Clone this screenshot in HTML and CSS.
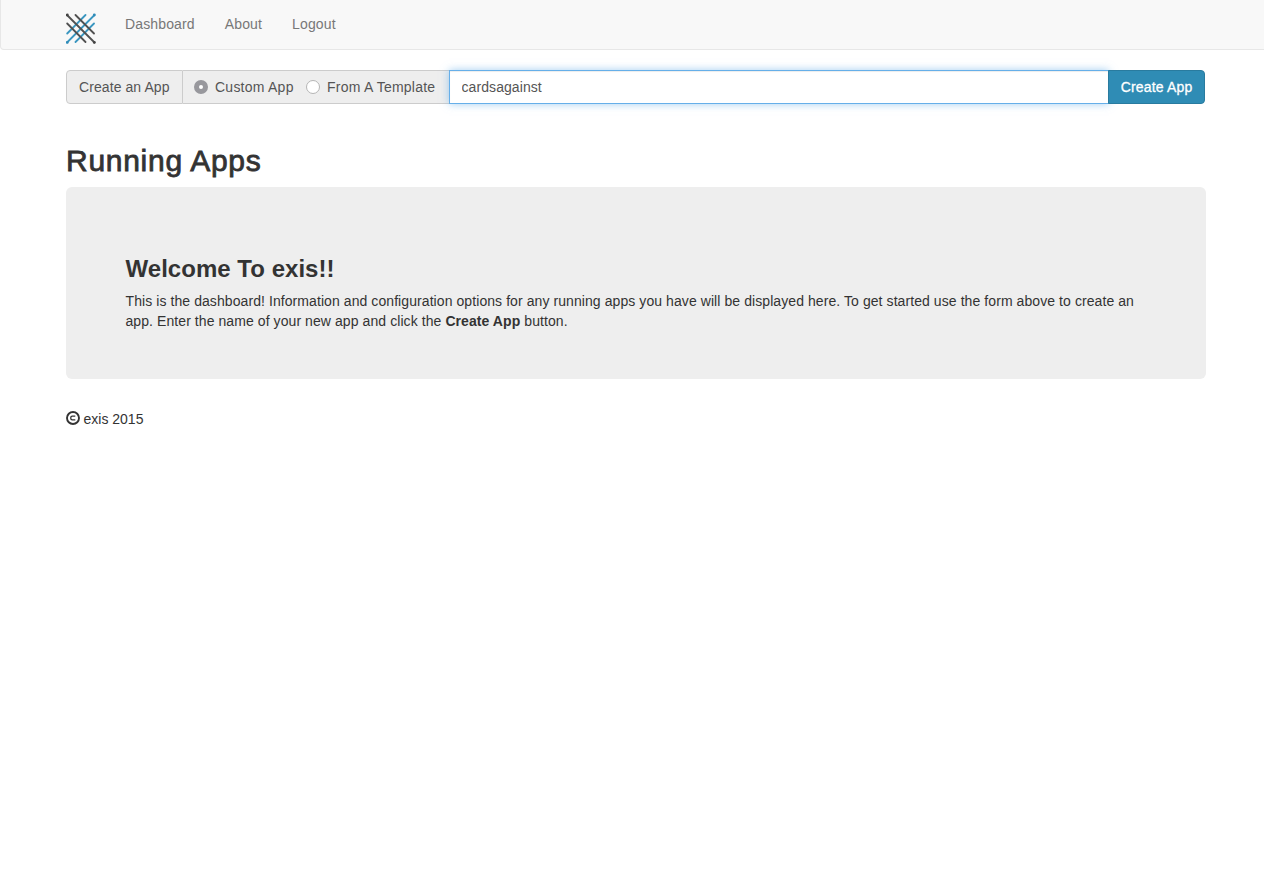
FILE: index.html
```html
<!DOCTYPE html>
<html lang="en">
<head>
<meta charset="utf-8">
<title>exis</title>
<link rel="stylesheet" href="styles.css">
</head>
<body>
<nav class="navbar">
  <a class="brand" href="#" aria-label="exis">
    <svg width="30" height="31" viewBox="0 0 30 31" fill="none" stroke-width="1.8" stroke-linecap="round">
      <g stroke="#3a96c0"><path d="M1.2 20.5 19.5 2M1 29.5 28.5 2M9.5 29 28 10.5"/></g>
      <g stroke="#505050"><path d="M1 2 28.5 29.5M9.5 2 28 20.5M1.2 10.5 19.5 29"/></g>
      <g fill="#444"><circle cx="1.3" cy="2" r="1.4"/><circle cx="28.3" cy="29.4" r="1.4"/></g>
      <g fill="#2f8bb8"><circle cx="28.3" cy="2" r="1.4"/><circle cx="1.3" cy="29.4" r="1.4"/></g>
    </svg>
  </a>
  <a class="nav-link" href="#">Dashboard</a>
  <a class="nav-link" href="#">About</a>
  <a class="nav-link" href="#">Logout</a>
</nav>
<main class="container">
  <form class="input-group">
    <span class="addon addon-title">Create an App</span>
    <span class="addon addon-options">
      <label class="option"><input class="radio" type="radio" name="kind" checked><span>Custom App</span></label>
      <label class="option"><input class="radio" type="radio" name="kind"><span>From A Template</span></label>
    </span>
    <input class="app-name" type="text" value="cardsagainst">
    <button class="create" type="button">Create App</button>
  </form>
  <h2 class="heading">Running Apps</h2>
  <section class="jumbotron">
    <h3 class="welcome">Welcome To exis!!</h3>
    <p class="intro"><span class="line">This is the dashboard! Information and configuration options for any running apps you have will be displayed here. To get started use the form above to create an</span> <span class="line">app. Enter the name of your new app and click the <b>Create App</b> button.</span></p>
  </section>
  <footer class="footer">
    <svg class="copy" width="14" height="14" viewBox="0 0 14 14" fill="none" stroke="#333">
      <circle cx="7" cy="7" r="6" stroke-width="1.9"/>
      <path d="M9.3 5.2H6.2Q4.8 5.2 4.8 6.5V7.5Q4.8 8.8 6.2 8.8H9.3" stroke-width="1.3"/>
    </svg>
    <span>exis 2015</span>
  </footer>
</main>
</body>
</html>
```
FILE: styles.css
```css
* { box-sizing: border-box; }
body {
  margin: 0;
  overflow: hidden;
  background: #fff;
  color: #333;
  font: 14px/20px "Liberation Sans", Arial, sans-serif;
}
.navbar {
  display: flex;
  align-items: flex-start;
  height: 50px;
  margin-right: -6px;
  padding-left: 65px;
  background: #f8f8f8;
  border: 1px solid #e7e7e7;
  border-top: 0;
  border-radius: 0 0 4px 4px;
}
.brand { width: 44px; padding-top: 13px; }
.brand svg { display: block; }
.nav-link { padding: 14px 15px; color: #777; text-decoration: none; letter-spacing: .14px; }
.container { width: 1140px; margin: 20px 0 0 66px; }
.input-group { display: flex; width: 1139px; height: 34px; }
.addon {
  display: flex;
  align-items: center;
  background: #eee;
  border: 1px solid #ccc;
  color: #555;
  white-space: nowrap;
}
.addon-title { width: 117px; padding-left: 12px; border-radius: 4px 0 0 4px; letter-spacing: .08px; }
.addon-options { width: 266px; padding-left: 11px; border-left: 0; border-right: 0; gap: 12px; letter-spacing: .24px; }
.option { display: flex; align-items: center; gap: 7px; }
.option:first-child { width: 100px; }
.radio {
  appearance: none;
  width: 14px;
  height: 14px;
  margin: 0;
  border: 1px solid #b5b5b5;
  border-radius: 50%;
  background: #fff;
}
.radio:checked { border: 5px solid #98989d; }
.app-name {
  position: relative;
  width: 660px;
  height: 34px;
  padding: 0 12px 0 11.5px;
  border: 1px solid #66afe9;
  outline: 0;
  box-shadow: inset 0 1px 1px rgba(0,0,0,.075), 0 0 8px rgba(102,175,233,.6);
  color: #555;
  font: inherit;
  letter-spacing: .08px;
}
.create {
  position: relative;
  width: 97px;
  margin-left: -1px;
  padding: 0;
  background: #2f8cb5;
  border: 1px solid #297b9f;
  border-radius: 0 4px 4px 0;
  color: #fff;
  font: inherit;
  letter-spacing: .17px;
  -webkit-text-stroke: .3px #fff;
}
.heading {
  margin: 40px 0 10px;
  font-size: 30px;
  font-weight: 400;
  line-height: 33px;
  letter-spacing: .72px;
  -webkit-text-stroke: .8px #333;
}
.jumbotron {
  height: 192px;
  padding: 69px 0 0 59.5px;
  background: #eee;
  border-radius: 6px;
}
.welcome { margin: 0 0 9px; font-size: 24px; font-weight: 700; line-height: 26px; letter-spacing: .03px; }
.intro { margin: 0; letter-spacing: .078px; }
.line { display: block; white-space: nowrap; }
.footer { display: flex; align-items: center; gap: 3.5px; margin-top: 30px; }
.copy { margin-top: -2px; }
```
